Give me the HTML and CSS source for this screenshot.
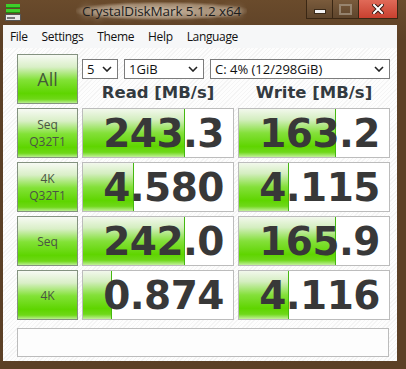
FILE: index.html
```html
<!DOCTYPE html>
<html lang="en">
<head>
  <meta charset="UTF-8">
  <title>CrystalDiskMark 5.1.2 x64</title>
  <link rel="stylesheet" href="styles.css">
</head>
<body>
  <div class="window">
    <div class="titlebar">
      <svg class="app-icon" width="16" height="17" viewBox="0 0 16 17">
        <rect x="1" y="0" width="14" height="3" fill="#3fcf2a"/>
        <rect x="1" y="3" width="14" height="1" fill="#1e8a14"/>
        <rect x="1" y="5" width="14" height="3" fill="#3fcf2a"/>
        <rect x="1" y="8" width="14" height="1" fill="#1e8a14"/>
        <rect x="0.5" y="10.5" width="15" height="6" fill="#e8e8e8" stroke="#555"/>
        <rect x="2" y="13" width="8" height="2" fill="#777"/>
      </svg>
      <div class="title">CrystalDiskMark 5.1.2 x64</div>
      <div class="caption-buttons">
        <div class="cap cap-min"><span></span></div>
        <div class="cap cap-max"><span></span></div>
        <div class="cap cap-close">
          <svg width="12" height="10" viewBox="0 0 12 10">
            <path d="M2 1 L10 9 M10 1 L2 9" stroke="#3a1a12" stroke-width="4" stroke-linecap="square"/>
            <path d="M2 1 L10 9 M10 1 L2 9" stroke="#fff" stroke-width="2" stroke-linecap="square"/>
          </svg>
        </div>
      </div>
    </div>

    <div class="client">
      <div class="menubar">
        <span>File</span>
        <span>Settings</span>
        <span>Theme</span>
        <span>Help</span>
        <span>Language</span>
      </div>

      <div class="panel">
        <div class="grid">
          <div class="btn btn-all">All</div>
          <div class="top">
            <div class="combos">
              <div class="combo combo-count"><span>5</span><svg width="10" height="6" viewBox="0 0 10 6"><path d="M1 1 L5 5 L9 1" fill="none" stroke="#222" stroke-width="1.6"/></svg></div>
              <div class="combo combo-size"><span>1GiB</span><svg width="10" height="6" viewBox="0 0 10 6"><path d="M1 1 L5 5 L9 1" fill="none" stroke="#222" stroke-width="1.6"/></svg></div>
              <div class="combo combo-drive"><span>C: 4% (12/298GiB)</span><svg width="10" height="6" viewBox="0 0 10 6"><path d="M1 1 L5 5 L9 1" fill="none" stroke="#222" stroke-width="1.6"/></svg></div>
            </div>
            <div class="headers">
              <div>Read [MB/s]</div>
              <div>Write [MB/s]</div>
            </div>
          </div>

          <div class="btn">Seq<br>Q32T1</div>
          <div class="cell"><div class="bar" style="width: 101px"></div><span class="num">243.3</span></div>
          <div class="cell"><div class="bar" style="width: 96px"></div><span class="num">163.2</span></div>

          <div class="btn">4K<br>Q32T1</div>
          <div class="cell"><div class="bar" style="width: 50px"></div><span class="num">4.580</span></div>
          <div class="cell"><div class="bar" style="width: 49px"></div><span class="num">4.115</span></div>

          <div class="btn">Seq</div>
          <div class="cell"><div class="bar" style="width: 101px"></div><span class="num">242.0</span></div>
          <div class="cell"><div class="bar" style="width: 96px"></div><span class="num">165.9</span></div>

          <div class="btn">4K</div>
          <div class="cell"><div class="bar" style="width: 28px"></div><span class="num">0.874</span></div>
          <div class="cell"><div class="bar" style="width: 49px"></div><span class="num">4.116</span></div>
        </div>

        <div class="status"></div>
      </div>
    </div>
  </div>
</body>
</html>
```

FILE: styles.css
```css
body {
  margin: 0;
  font-family: "Open Sans", "Noto Sans", sans-serif;
}
.window {
  width: 406px;
  height: 369px;
  background: linear-gradient(#6a4b2c, #5c4026 40px, #5c4026);
  display: flex;
  flex-direction: column;
  overflow: hidden;
}
.titlebar {
  height: 25px;
  display: flex;
  align-items: flex-start;
  position: relative;
}
.app-icon {
  margin: 4px 0 0 5px;
}
.title {
  position: absolute;
  left: 76px;
  top: 2px;
  font-size: 13.5px;
  letter-spacing: -0.1px;
  color: #1c1c1c;
  padding: 0 6px;
  border-radius: 10px;
  background: radial-gradient(ellipse at center, rgba(255, 240, 220, 0.55) 0%, rgba(255, 240, 220, 0.35) 55%, rgba(255, 240, 220, 0) 75%);
  text-shadow: 0 0 6px rgba(255, 250, 240, 0.9);
}
.caption-buttons {
  margin-left: auto;
  margin-right: 8px;
  display: flex;
}
.cap {
  height: 19px;
  box-sizing: border-box;
  display: flex;
  align-items: center;
  justify-content: center;
}
.cap-min,
.cap-max {
  width: 26px;
  background: linear-gradient(#7a5b3c, #5e452c);
  border: 1px solid #3a2714;
  border-top: none;
  border-right: none;
}
.cap-min span {
  width: 10px;
  height: 3px;
  margin-top: 5px;
  background: #f2f2f2;
  box-shadow: 0 0 0 1px #3a2a1a;
}
.cap-max span {
  width: 9px;
  height: 7px;
  border: 2px solid #a89a88;
  box-sizing: content-box;
  opacity: 0.7;
}
.cap-close {
  width: 40px;
  background: linear-gradient(#e06a58, #c8402f);
  border: 1px solid #3a2714;
  border-top: none;
}

.client {
  flex: 1;
  margin: 0 9px 8px 3px;
  display: flex;
  flex-direction: column;
  background: repeating-linear-gradient(135deg, #fdfdfd 0 2px, #f4f4f4 2px 3px);
}
.menubar {
  height: 23px;
  display: flex;
  align-items: center;
  gap: 14px;
  padding-left: 7px;
  font-size: 12px;
  letter-spacing: -0.35px;
  color: #111;
  background: #f6f7f8;
}
.panel {
  flex: 1;
  padding: 6px 8px 4px 14px;
  display: flex;
  flex-direction: column;
}
.grid {
  display: grid;
  grid-template-columns: 61px 152px 152px;
  grid-auto-rows: 50px;
  column-gap: 4px;
  row-gap: 4px;
}
.btn {
  border: 1px solid #849280;
  background: linear-gradient(#f7faf4 0%, #d9efc7 25%, #82e236 52%, #5ed500 80%, #6fd818 92%, #b9ee90 100%);
  display: flex;
  align-items: center;
  justify-content: center;
  text-align: center;
  font-size: 12px;
  line-height: 17px;
  color: #4a5444;
}
.btn-all {
  font-size: 18px;
  color: #445a38;
}
.top {
  grid-column: 2 / 4;
  display: flex;
  flex-direction: column;
}
.combos {
  display: flex;
  margin-top: 5px;
  height: 20px;
}
.combo {
  box-sizing: border-box;
  height: 20px;
  border: 1px solid #7c7c7c;
  background: #fff;
  display: flex;
  align-items: center;
  justify-content: space-between;
  padding: 0 5px 0 4px;
  font-size: 13px;
  color: #111;
}
.combo-count {
  width: 36px;
}
.combo-size {
  width: 80px;
  margin-left: 6px;
}
.combo-drive {
  flex: 1;
  margin-left: 6px;
}
.headers {
  flex: 1;
  display: grid;
  grid-template-columns: 152px 152px;
  column-gap: 4px;
  align-items: center;
  text-align: center;
  font-family: "DejaVu Sans", sans-serif;
  font-weight: bold;
  font-size: 16.5px;
  color: #333a40;
  padding-top: 2px;
}
.cell {
  position: relative;
  border: 1px solid #bcbcbc;
  background: #fff;
  display: flex;
  align-items: center;
  justify-content: flex-end;
  padding-right: 9px;
  overflow: hidden;
}
.bar {
  position: absolute;
  left: 0;
  top: 0;
  bottom: 0;
  border-right: 1px solid #45b810;
  background: linear-gradient(#f2f8ec 0%, #d4eec0 22%, #84e03a 50%, #5fd500 78%, #6fd81a 90%, #c2f09a 100%);
}
.num {
  position: relative;
  font-family: "DejaVu Sans", sans-serif;
  font-weight: bold;
  font-size: 39px;
  color: #383838;
  letter-spacing: -0.5px;
}
.status {
  margin-top: 8px;
  height: 29px;
  width: 372px;
  border: 1px solid #bcbcbc;
  background: #fdfdfd;
  box-sizing: border-box;
}
```
